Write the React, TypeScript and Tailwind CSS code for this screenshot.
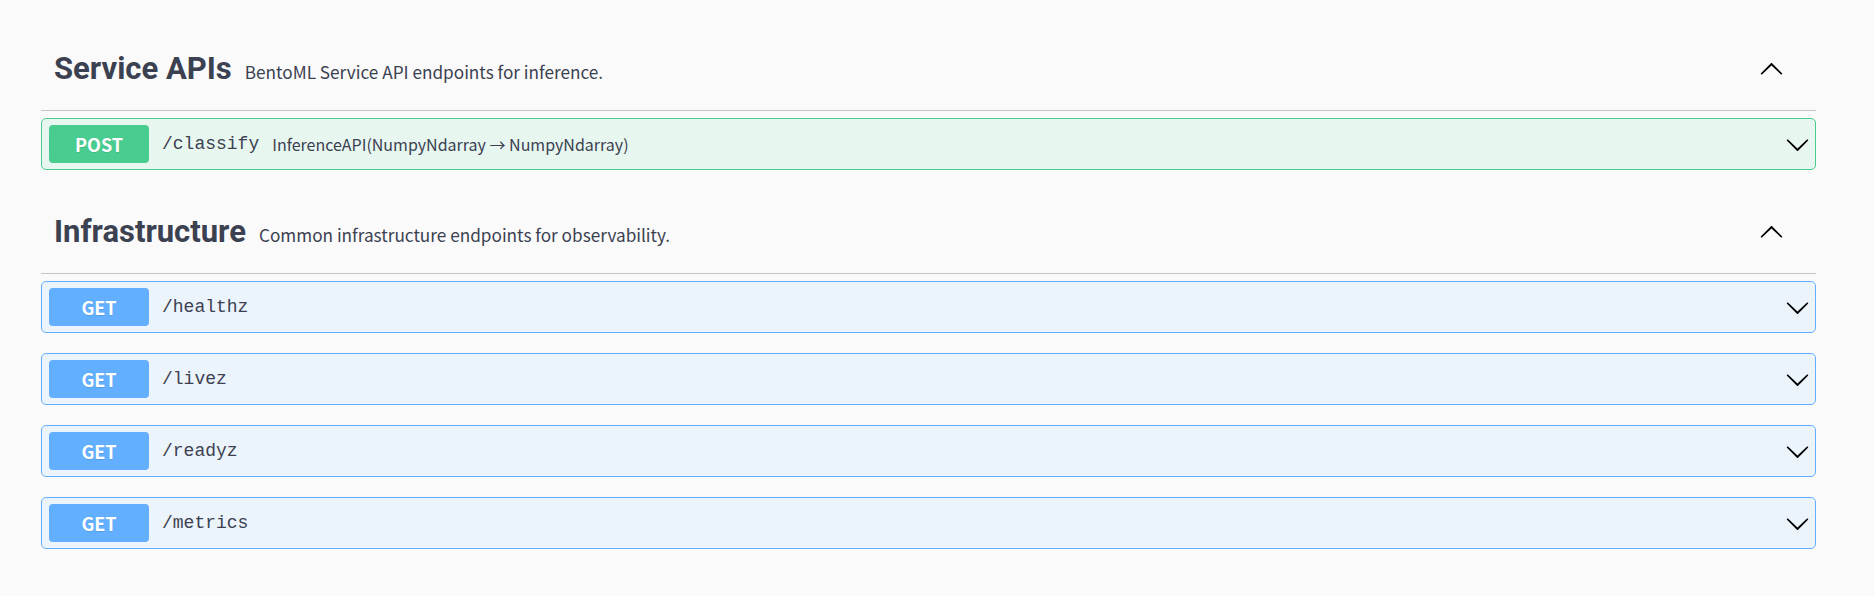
import React from "react";

type Op = { method: "POST" | "GET"; path: string; desc?: string };

const sections: { title: string; desc: string; ops: Op[] }[] = [
  {
    title: "Service APIs",
    desc: "BentoML Service API endpoints for inference.",
    ops: [
      {
        method: "POST",
        path: "/classify",
        desc: "InferenceAPI(NumpyNdarray → NumpyNdarray)",
      },
    ],
  },
  {
    title: "Infrastructure",
    desc: "Common infrastructure endpoints for observability.",
    ops: [
      { method: "GET", path: "/healthz" },
      { method: "GET", path: "/livez" },
      { method: "GET", path: "/readyz" },
      { method: "GET", path: "/metrics" },
    ],
  },
];

const Chevron: React.FC<{ up?: boolean; className?: string }> = ({ up, className }) => (
  <svg
    viewBox="0 0 20 20"
    width="25"
    height="25"
    className={className}
    style={up ? { transform: "rotate(180deg)" } : undefined}
  >
    <path
      fill="#000"
      d="M17.418 6.109c.272-.268.709-.268.979 0s.271.701 0 .969l-7.908 7.83c-.27.268-.707.268-.979 0l-7.908-7.83c-.27-.268-.27-.701 0-.969.271-.268.709-.268.979 0L10 13.25l7.418-7.141z"
    />
  </svg>
);

const OpBlock: React.FC<{ op: Op }> = ({ op }) => {
  const post = op.method === "POST";
  return (
    <div
      className={
        post
          ? "flex h-[52px] items-center rounded-[5px] border border-[#49cc90] bg-[#e8f6f0] pl-[7px] pr-[5px]"
          : "flex h-[52px] items-center rounded-[5px] border border-[#61affe] bg-[#ebf3fb] pl-[7px] pr-[5px]"
      }
    >
      <span
        className={
          post
            ? "flex h-[38px] w-[100px] items-center justify-center rounded-[4px] bg-[#49cc90] text-[18px] font-bold text-white"
            : "flex h-[38px] w-[100px] items-center justify-center rounded-[4px] bg-[#61affe] text-[18px] font-bold text-white"
        }
        style={{ textShadow: "0 1px 0 rgba(0,0,0,.1)" }}
      >
        {op.method}
      </span>
      <span className="ml-[13px] font-['Liberation_Mono',monospace] text-[18px] text-[#3b4151]">
        {op.path}
      </span>
      {op.desc && (
        <span className="ml-[13px] text-[16px] text-[#3b4151]">{op.desc}</span>
      )}
      <Chevron className="ml-auto" />
    </div>
  );
};

export default function App() {
  return (
    <div className="h-[596px] w-full bg-[#fafafa] pl-[41px] pt-[29px] font-['Noto_Sans_CJK_KR','Noto_Sans',sans-serif]">
      <div className="w-[1775px]">
        {sections.map((s, i) => (
          <div key={s.title} className={i > 0 ? "mt-[22px]" : ""}>
            <div className="flex h-[82px] items-center border-b border-[#c4c6cb] pl-[13px] pr-[32px]">
              <h3 className="font-['Roboto',sans-serif] text-[31px] font-bold text-[#3b4151]">
                {s.title}
              </h3>
              <span className="ml-[13px] mt-[4px] text-[17.2px] text-[#3b4151]">{s.desc}</span>
              <Chevron up className="ml-auto" />
            </div>
            <div className="mt-[7px] flex flex-col gap-[20px]">
              {s.ops.map((op) => (
                <OpBlock key={op.path} op={op} />
              ))}
            </div>
          </div>
        ))}
      </div>
    </div>
  );
}
